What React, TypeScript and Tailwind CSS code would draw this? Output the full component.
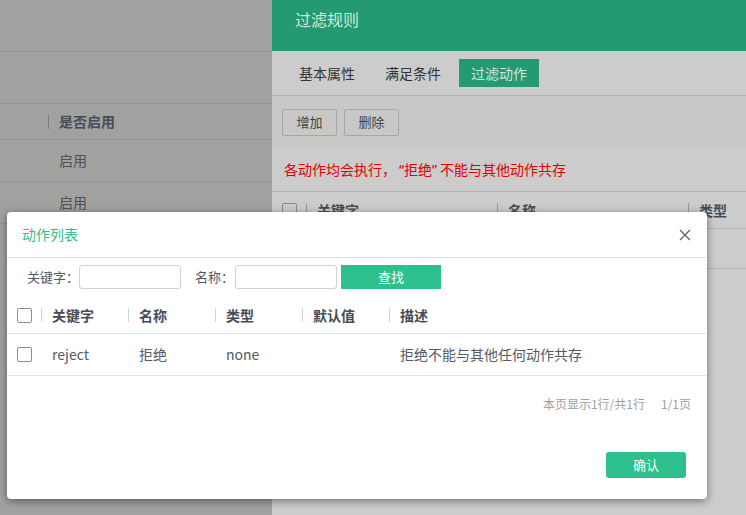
import React from 'react';

const font = 'font-["Noto_Sans_CJK_SC","Noto_Sans",sans-serif]';

const Check = () => (
    <span className="block w-[15px] h-[15px] border border-[#8a8d94] rounded-[2px] bg-white" />
);

const cols = ['关键字', '名称', '类型', '默认值', '描述'];

const App = () => {
    return (
        <div className={`relative w-[746px] h-[515px] overflow-hidden flex ${font}`}>
            {/* page behind the drawer */}
            <div className="w-[272px] shrink-0 h-full bg-[#a1a1a0]">
                <div className="h-[52px] border-b border-[#939393]" />
                <div className="h-[52px] border-b border-[#939393]" />
                <div className="h-[36px] border-b border-[#939393] flex items-center">
                    <span className="ml-[48px] w-px h-[14px] bg-[#7d7d7d]" />
                    <span className="ml-[10px] text-[14px] font-bold text-[#474c58]">是否启用</span>
                </div>
                <div className="h-[42px] border-b border-[#939393] flex items-center pl-[59px] text-[14px] text-[#4c505a]">启用</div>
                <div className="h-[42px] border-b border-[#939393] flex items-center pl-[59px] text-[14px] text-[#4c505a]">启用</div>
            </div>

            {/* drawer */}
            <div className="flex-1 h-full bg-[#cccccc] flex flex-col">
                <div className="h-[51px] bg-[#239a72] pt-[7px] pl-[23px] text-[16px] text-[#cde7dd]">过滤规则</div>
                <div className="h-[45px] border-b border-[#b4b4b4] flex items-center gap-[6px] pl-[15px] text-[14px]">
                    <span className="w-[80px] h-[28px] flex items-center justify-center text-[#333]">基本属性</span>
                    <span className="w-[80px] h-[28px] flex items-center justify-center text-[#333]">满足条件</span>
                    <span className="w-[80px] h-[28px] flex items-center justify-center bg-[#239a72] text-[#cde7dd]">过滤动作</span>
                </div>
                <div className="h-[52px] bg-[#c8c8c6] flex items-center gap-[7px] pl-[10px]">
                    <button className="w-[55px] h-[27px] border border-[#a6a6a6] rounded-[2px] text-[13px] text-[#444]">增加</button>
                    <button className="w-[55px] h-[27px] border border-[#a6a6a6] rounded-[2px] text-[13px] text-[#444]">删除</button>
                </div>
                <div className="h-[44px] border-b border-[#b4b4b4] flex items-center pl-[12px] text-[14px] text-[#e00000]">
                    各动作均会执行，<span className='font-["Noto_Sans"] pl-[3px]'>“</span>拒绝<span className='font-["Noto_Sans"] pr-[3px]'>”</span>不能与其他动作共存
                </div>
                <div className="h-[37px] border-b border-[#b4b4b4] flex items-center text-[14px] font-bold text-[#474c58]">
                    <div className="w-[34px] shrink-0 pl-[10px] flex items-center">
                        <span className="block w-[15px] h-[15px] border border-[#8a8a8a] rounded-[2px]" />
                    </div>
                    {['关键字', '名称', '类型'].map(c => (
                        <div key={c} className="w-[191px] flex items-center shrink-0">
                            <span className="w-px h-[14px] bg-[#9a9a9a]" />
                            <span className="ml-[10px]">{c}</span>
                        </div>
                    ))}
                </div>
                <div className="h-[40px] border-b border-[#b4b4b4]" />
            </div>

            {/* modal */}
            <div className="absolute left-[7px] top-[212px] w-[700px] h-[287px] bg-white rounded-[4px] shadow-[0_2px_8px_rgba(0,0,0,0.45)] flex flex-col">
                <div className="h-[46px] border-b border-[#dbe5e3] flex items-center justify-between pl-[15px] pr-[16px]">
                    <span className="text-[14px] text-[#35bd8c]">动作列表</span>
                    <svg width="12" height="12" viewBox="0 0 12 12" className="text-[#5a5f6e]">
                        <path d="M1 1L11 11M11 1L1 11" stroke="currentColor" strokeWidth="1.3" />
                    </svg>
                </div>
                <div className="flex items-center pt-[7px] pl-[20px] text-[13px] text-[#555a66]">
                    <span className="w-[52px]">关键字：</span>
                    <span className="w-[102px] h-[24px] border border-[#cfd1d4] rounded-[3px]" />
                    <span className="ml-[14px] w-[40px]">名称：</span>
                    <span className="w-[102px] h-[24px] border border-[#cfd1d4] rounded-[3px]" />
                    <button className="ml-[4px] w-[100px] h-[24px] bg-[#2dc08d] text-white text-[13px]">查找</button>
                </div>
                <div className="mt-[8px] h-[37px] border-b border-[#dbe5e3] flex items-center text-[14px] font-bold text-[#474c58]">
                    <div className="w-[34px] shrink-0 pl-[10px] flex items-center">
                        <Check />
                    </div>
                    {cols.map((c, i) => (
                        <div key={c} className={`${i === 4 ? 'flex-1' : 'w-[87px]'} flex items-center shrink-0`}>
                            <span className="w-px h-[14px] bg-[#cfd2d6]" />
                            <span className="ml-[10px]">{c}</span>
                        </div>
                    ))}
                </div>
                <div className="h-[42px] border-b border-[#dbe5e3] flex items-center text-[14px] text-[#555a66]">
                    <div className="w-[34px] shrink-0 pl-[10px] flex items-center">
                        <Check />
                    </div>
                    <div className="w-[87px] pl-[11px]">reject</div>
                    <div className="w-[87px] pl-[11px]">拒绝</div>
                    <div className="w-[87px] pl-[11px]">none</div>
                    <div className="w-[87px] pl-[11px]"></div>
                    <div className="flex-1 pl-[11px]">拒绝不能与其他任何动作共存</div>
                </div>
                <div className="flex justify-end gap-[16px] pr-[16px] pt-[19px] text-[12px] text-[#a0a0a0]">
                    <span>本页显示1行/共1行</span>
                    <span>1/1页</span>
                </div>
                <div className="flex justify-end pr-[21px] mt-auto mb-[21px]">
                    <button className="w-[80px] h-[26px] rounded-[3px] bg-[#2dc08d] text-white text-[13px]">确认</button>
                </div>
            </div>
        </div>
    );
};

export default App;
